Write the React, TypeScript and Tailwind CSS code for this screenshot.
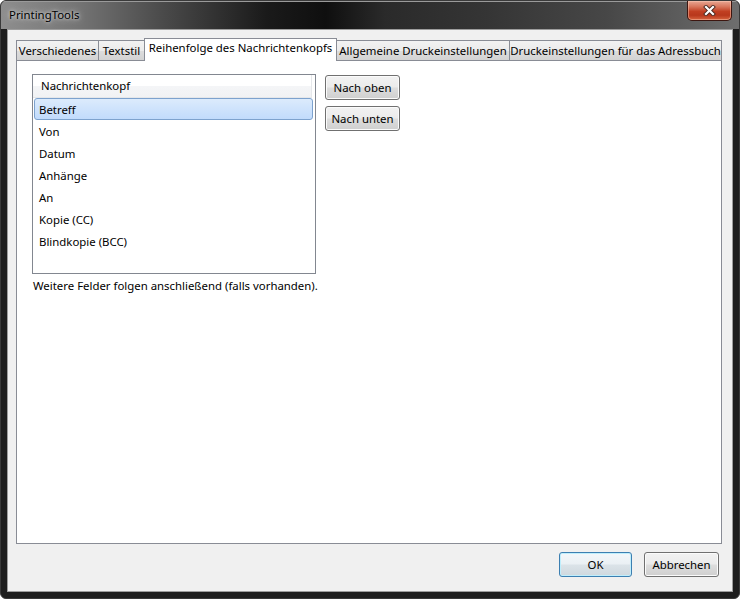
import React from 'react';

const headers = ['Betreff', 'Von', 'Datum', 'Anhänge', 'An', 'Kopie (CC)', 'Blindkopie (BCC)'];

const btn =
  'h-[25px] rounded-[3px] border border-[#707070] bg-[linear-gradient(180deg,#f2f2f2_0%,#ebebeb_48%,#dddddd_52%,#cfcfcf_100%)] shadow-[inset_0_0_0_1px_#fbfbfb] text-[11.4px] leading-none text-black flex items-center justify-center';

const tabOff =
  'h-[20px] border border-b-0 border-[#898c95] bg-[linear-gradient(180deg,#f2f2f2_0%,#ebebeb_50%,#dddddd_51%,#d3d3d3_100%)] flex items-center justify-center leading-none whitespace-nowrap';

const CloseButton = () => (
  <div className="w-[45px] h-[20px] rounded-b-[5px] border border-t-0 border-[#3d1610] bg-[linear-gradient(180deg,#e9a793_0%,#d8765c_30%,#c13f22_55%,#b8381c_75%,#d7643f_100%)] shadow-[inset_0_0_0_1px_rgba(255,210,190,0.45)] flex items-center justify-center">
    <svg width="13" height="11" viewBox="0 0 13 11">
      <path d="M3 2 L10 9 M10 2 L3 9" stroke="#4a2a22" strokeWidth="4" strokeLinecap="square" />
      <path d="M3 2 L10 9 M10 2 L3 9" stroke="#ffffff" strokeWidth="2.2" strokeLinecap="square" />
    </svg>
  </div>
);

export default function App() {
  return (
    <div className="w-[740px] h-[599px] rounded-[6px] overflow-hidden bg-[#1e1e1e] border border-[#3a3a3a] flex flex-col font-['Noto_Sans',sans-serif] text-[11.4px] text-black">
      {/* title bar */}
      <div className="h-[28px] shrink-0 flex items-start justify-between bg-[linear-gradient(90deg,#8e8e8e_0%,#767676_10%,#4a4a4a_22%,#1a1a1a_36%,#0f0f0f_44%,#2a2a2a_52%,#353535_66%,#474747_82%,#616161_94%,#6e6e6e_100%)] shadow-[inset_0_1px_0_#9a9a9a]">
        <div className="pl-[8px] pt-[6px] leading-[16px] text-[11.4px] text-black [text-shadow:0_0_6px_#d8d8d8,0_0_3px_#cfcfcf]">
          PrintingTools
        </div>
        <div className="mr-[7px]">
          <CloseButton />
        </div>
      </div>

      {/* frame body */}
      <div className="flex-1 flex px-[6px] pb-[6px]">
        <div className="flex-1 flex flex-col border border-[#9d9d9d] bg-[#f0f0f0] pt-[8px] pl-[8px] pr-[10px]">
          {/* tab strip */}
          <div className="h-[22px] flex items-end">
            <div className={tabOff + ' w-[83px]'}>Verschiedenes</div>
            <div className={tabOff + ' -ml-px w-[47px]'}>Textstil</div>
            <div className="-ml-px w-[193px] h-[23px] -mb-px relative z-10 border border-b-0 border-[#898c95] bg-white flex items-start justify-center pt-[3px] leading-none whitespace-nowrap">
              Reihenfolge des Nachrichtenkopfs
            </div>
            <div className={tabOff + ' -ml-px w-[174px]'}>Allgemeine Druckeinstellungen</div>
            <div className={tabOff + ' -ml-px w-[213px]'}>Druckeinstellungen für das Adressbuch</div>
          </div>

          {/* tab panel */}
          <div className="h-[484px] border border-[#898c95] bg-white pl-[15px] pt-[13px]">
            <div className="flex items-start">
              <div className="w-[284px] h-[200px] border border-[#828790] bg-white flex flex-col">
                <div className="h-[23px] w-[279px] border-r border-b border-[#e5e7ea] bg-[linear-gradient(180deg,#ffffff_0%,#ffffff_50%,#f4f5f7_51%,#f1f2f4_100%)] flex items-center pl-[8px]">
                  Nachrichtenkopf
                </div>
                {headers.map((h, i) => (
                  <div
                    key={h}
                    className={
                      i === 0
                        ? 'mx-[1px] w-[279px] h-[22px] rounded-[3px] border border-[#7da2ce] bg-[linear-gradient(180deg,#dcebfc_0%,#c1dbfc_100%)] flex items-center pl-[4px] pt-[1px]'
                        : 'w-[279px] h-[22px] flex items-center pl-[6px] pt-[1px]'
                    }
                  >
                    {h}
                  </div>
                ))}
              </div>
              <div className="ml-[9px] mt-[1px] flex flex-col gap-[6px]">
                <button className={btn + ' w-[75px]'}>Nach oben</button>
                <button className={btn + ' w-[75px]'}>Nach unten</button>
              </div>
            </div>
            <div className="mt-[4px] pl-[1px] leading-[16px]">Weitere Felder folgen anschließend (falls vorhanden).</div>
          </div>

          {/* dialog buttons */}
          <div className="h-[47px] flex items-start justify-end pt-[8px] pr-[3px] gap-[12px]">
            <button className="w-[73px] h-[25px] rounded-[3px] border border-[#3c7fb1] bg-[linear-gradient(180deg,#f3f7fa_0%,#eaf0f4_48%,#dbe3e8_52%,#cfd8de_100%)] shadow-[inset_0_0_0_1px_#bfeefc] text-[11.4px] leading-none text-black flex items-center justify-center">
              OK
            </button>
            <button className={btn + ' w-[75px]'}>Abbrechen</button>
          </div>
        </div>
      </div>
    </div>
  );
}
